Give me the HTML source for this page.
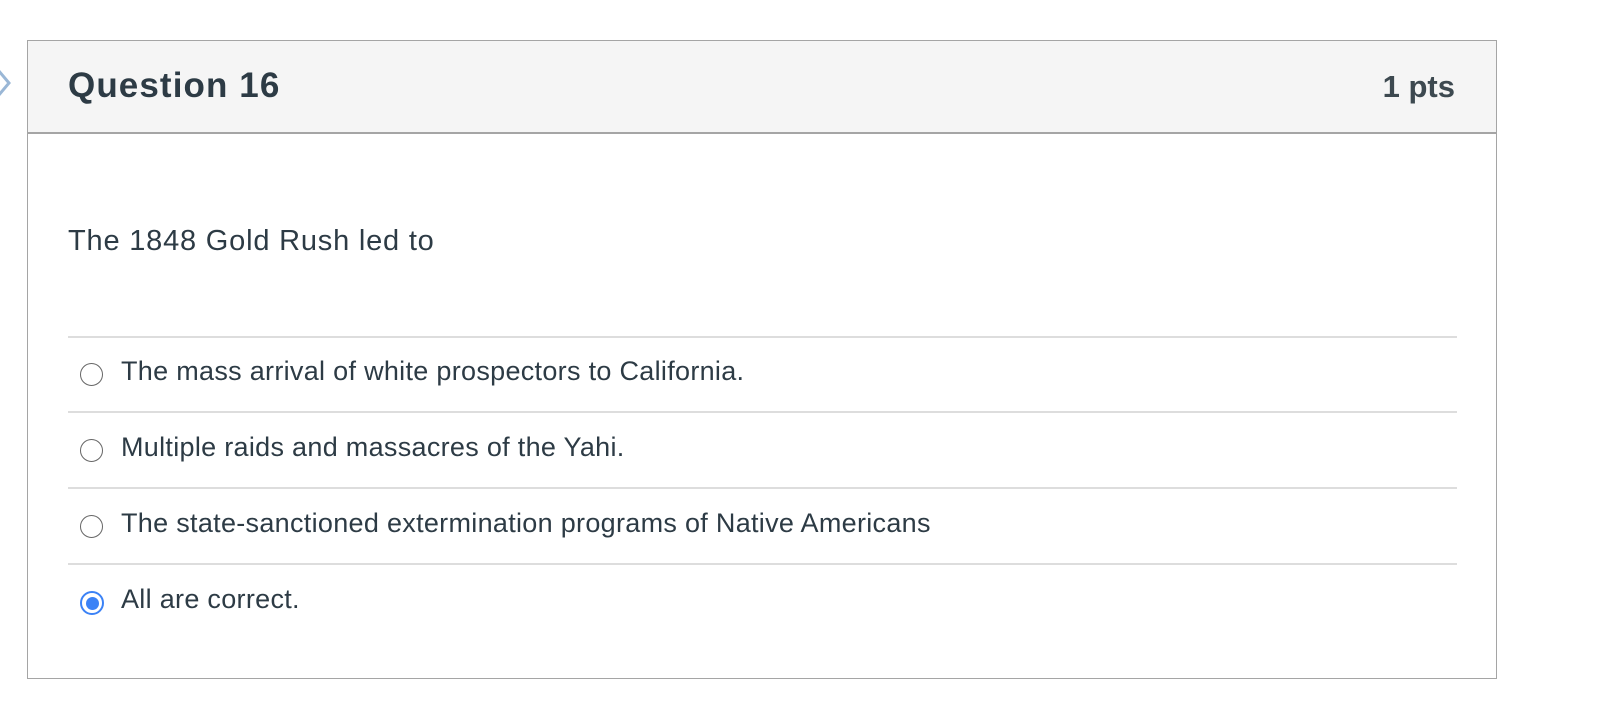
<!DOCTYPE html>
<html><head><style>
body{margin:0;width:1610px;height:722px;background:#fff;font-family:"Liberation Sans",sans-serif;color:#2d3b45;position:relative;overflow:hidden}
.box{position:absolute;left:27px;top:40px;width:1468px;height:637px;border:1px solid #a5a5a5;}
.hdr{position:absolute;left:0;top:0;width:1468px;height:91px;background:#f5f5f5;border-bottom:2px solid #a5a5a5}
div{line-height:1}
.t{position:absolute;left:40px;top:27px;font-size:35px;font-weight:bold;letter-spacing:1.1px;white-space:nowrap}
.p{position:absolute;right:41px;top:30px;font-size:31px;font-weight:bold;color:#3d4950;white-space:nowrap}
.q{position:absolute;left:40px;top:186px;font-size:29px;letter-spacing:0.8px;white-space:nowrap}
.sep{position:absolute;left:40px;width:1389px;height:2px;background:#ddd}
.o{position:absolute;left:93px;font-size:27px;letter-spacing:0.3px;white-space:nowrap}
.r{position:absolute;left:52px;width:21px;height:21px;border:1.5px solid #666;border-radius:50%;background:#fff}
</style></head><body>
<svg style="position:absolute;left:0;top:68px" width="12" height="32"><path d="M-2 2 L9 15 L-2 28" stroke="#9ab7d6" stroke-width="3" fill="none"/></svg>
<div class="box">
<div class="hdr"><div class="t">Question 16</div><div class="p">1 pts</div></div>
<div class="q">The 1848 Gold Rush led to</div>
<div class="sep" style="top:295px"></div>
<div class="r" style="top:322px"></div><div class="o" style="top:317px">The mass arrival of white prospectors to California.</div>
<div class="sep" style="top:370px"></div>
<div class="r" style="top:398px"></div><div class="o" style="top:393px">Multiple raids and massacres of the Yahi.</div>
<div class="sep" style="top:446px"></div>
<div class="r" style="top:474px"></div><div class="o" style="top:469px">The state-sanctioned extermination programs of Native Americans</div>
<div class="sep" style="top:522px"></div>
<div class="r" style="top:550px;border:2px solid #3b82f6;width:20px;height:20px"><div style="position:absolute;left:3.5px;top:3.5px;width:13px;height:13px;border-radius:50%;background:#3b82f6"></div></div><div class="o" style="top:545px">All are correct.</div>
</div>
</body></html>
